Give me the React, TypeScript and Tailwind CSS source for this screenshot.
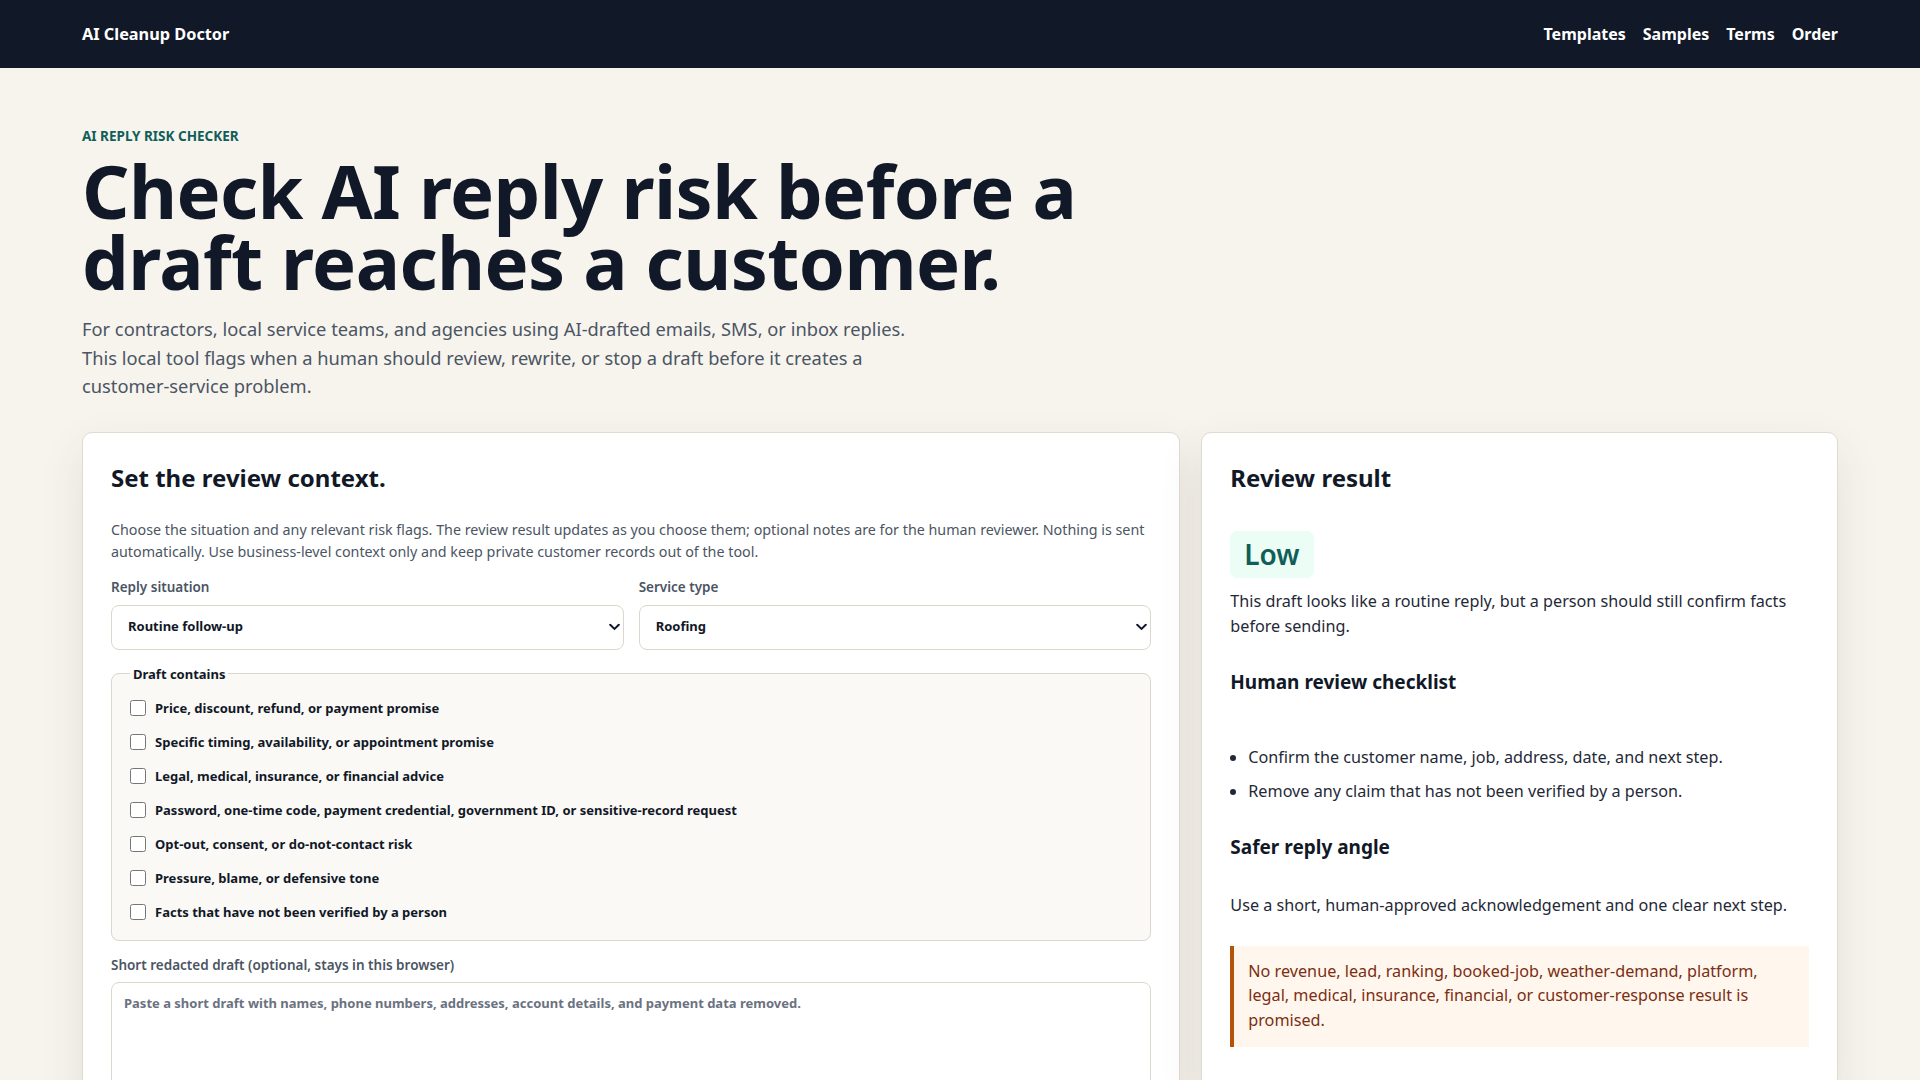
import React from "react";

const font = { fontFamily: '"Noto Sans", "Open Sans", sans-serif' };

const flags = [
  "Price, discount, refund, or payment promise",
  "Specific timing, availability, or appointment promise",
  "Legal, medical, insurance, or financial advice",
  "Password, one-time code, payment credential, government ID, or sensitive-record request",
  "Opt-out, consent, or do-not-contact risk",
  "Pressure, blame, or defensive tone",
  "Facts that have not been verified by a person",
];

function Chevron() {
  return (
    <svg
      className="pointer-events-none absolute right-[4px] top-1/2 -translate-y-1/2"
      width="11"
      height="7"
      viewBox="0 0 11 7"
      fill="none"
    >
      <path d="M1.2 1.2 5.5 5.4 9.8 1.2" stroke="#111827" strokeWidth="2" strokeLinecap="round" />
    </svg>
  );
}

function SelectField({ label, value }: { label: string; value: string }) {
  return (
    <label className="flex flex-col">
      <span className="text-[13.5px] font-semibold leading-[18px] text-[#4b5563]">{label}</span>
      <div className="relative mt-[9px]">
        <select
          className="h-[45px] w-full appearance-none rounded-[8px] border border-[#dcd7cb] bg-white pl-[16px] text-[13px] font-bold text-[#111827] outline-none"
          defaultValue={value}
        >
          <option>{value}</option>
        </select>
        <Chevron />
      </div>
    </label>
  );
}

export default function App() {
  return (
    <div className="min-h-screen bg-[#f7f4ee] text-[#111827]" style={font}>
      <header className="flex h-[68px] items-center justify-between bg-[#111827] px-[82px]">
        <span className="text-[16.3px] font-bold text-white">AI Cleanup Doctor</span>
        <nav className="flex gap-[17px] text-[16px] font-bold text-white">
          <a>Templates</a>
          <a>Samples</a>
          <a>Terms</a>
          <a>Order</a>
        </nav>
      </header>

      <main className="px-[82px] pt-[59px]">
        <p className="text-[13.5px] font-bold uppercase leading-[18px] text-[#115e59]">
          AI Reply Risk Checker
        </p>
        <h1 className="mt-[10px] max-w-[1040px] text-[74px] font-bold leading-[71px] tracking-[-0.6px] text-[#111827]">
          Check AI reply risk before a draft reaches a customer.
        </h1>
        <p className="mt-[18px] max-w-[840px] text-[18.3px] leading-[28.5px] text-[#4b5563]">
          For contractors, local service teams, and agencies using AI-drafted emails, SMS, or inbox
          replies. This local tool flags when a human should review, rewrite, or stop a draft before it
          creates a customer-service problem.
        </p>

        <div className="mt-[31px] grid grid-cols-[minmax(0,1.725fr)_minmax(0,1fr)] items-start gap-[21px]">
          <section className="rounded-[10px] border border-[#e0dbd0] bg-white px-[28px] pt-[28px] pb-[40px] shadow-[0_18px_45px_rgba(60,50,30,0.10)]">
            <h2 className="text-[24px] font-bold leading-[34px]">Set the review context.</h2>
            <p className="mt-[24px] text-[14.3px] leading-[22px] text-[#4b5563]">
              Choose the situation and any relevant risk flags. The review result updates as you choose
              them; optional notes are for the human reviewer. Nothing is sent automatically. Use
              business-level context only and keep private customer records out of the tool.
            </p>

            <div className="mt-[15px] grid grid-cols-2 gap-[15px]">
              <SelectField label="Reply situation" value="Routine follow-up" />
              <SelectField label="Service type" value="Roofing" />
            </div>

            <fieldset className="mt-[15px] rounded-[8px] border border-[#dcd7cb] bg-[#faf9f6] px-[18px] pt-[15px] pb-[18px]">
              <legend className="px-[3px] text-[13px] font-bold leading-[18px]">Draft contains</legend>
              <div className="flex flex-col gap-[14px]">
                {flags.map((f) => (
                  <label key={f} className="flex items-center gap-[9px] text-[13px] font-bold leading-[20px]">
                    <input type="checkbox" className="h-[16px] w-[16px] shrink-0" />
                    <span>{f}</span>
                  </label>
                ))}
              </div>
            </fieldset>

            <label className="mt-[15px] block text-[13.5px] font-semibold leading-[18px] text-[#4b5563]">
              Short redacted draft (optional, stays in this browser)
            </label>
            <textarea
              className="mt-[8px] block h-[150px] w-full resize-none rounded-[8px] border border-[#dcd7cb] bg-white px-[12px] pt-[11px] text-[13px] font-bold leading-[18px] text-[#111827] outline-none placeholder:text-[#6b7280]"
              placeholder="Paste a short draft with names, phone numbers, addresses, account details, and payment data removed."
            />
          </section>

          <section className="rounded-[10px] border border-[#e0dbd0] bg-white px-[28px] pt-[28px] pb-[40px] shadow-[0_18px_45px_rgba(60,50,30,0.10)]">
            <h2 className="text-[24px] font-bold leading-[34px]">Review result</h2>
            <div className="mt-[36px] inline-block rounded-[7px] bg-[#ecfdf5] px-[14px] py-[6px] text-[28px] font-semibold leading-[35px] text-[#115e59]">
              Low
            </div>
            <p className="mt-[11px] text-[16.2px] leading-[25px] text-[#1f2937]">
              This draft looks like a routine reply, but a person should still confirm facts before
              sending.
            </p>
            <h3 className="mt-[30px] text-[19px] font-bold leading-[26px]">Human review checklist</h3>
            <ul className="mt-[50px] flex list-disc flex-col gap-[9px] pl-[18px] text-[16.2px] leading-[25px] text-[#1f2937]">
              <li>Confirm the customer name, job, address, date, and next step.</li>
              <li>Remove any claim that has not been verified by a person.</li>
            </ul>
            <h3 className="mt-[30px] text-[19px] font-bold leading-[26px]">Safer reply angle</h3>
            <p className="mt-[33px] text-[16.2px] leading-[25px] text-[#1f2937]">
              Use a short, human-approved acknowledgement and one clear next step.
            </p>
            <div className="mt-[28px] border-l-[4px] border-[#b45309] bg-[#fff7ed] pt-[13px] pr-[16px] pb-[15px] pl-[14px] text-[16.2px] leading-[24.5px] text-[#7c2d12]">
              No revenue, lead, ranking, booked-job, weather-demand, platform, legal, medical, insurance,
              financial, or customer-response result is promised.
            </div>
          </section>
        </div>
      </main>
    </div>
  );
}
